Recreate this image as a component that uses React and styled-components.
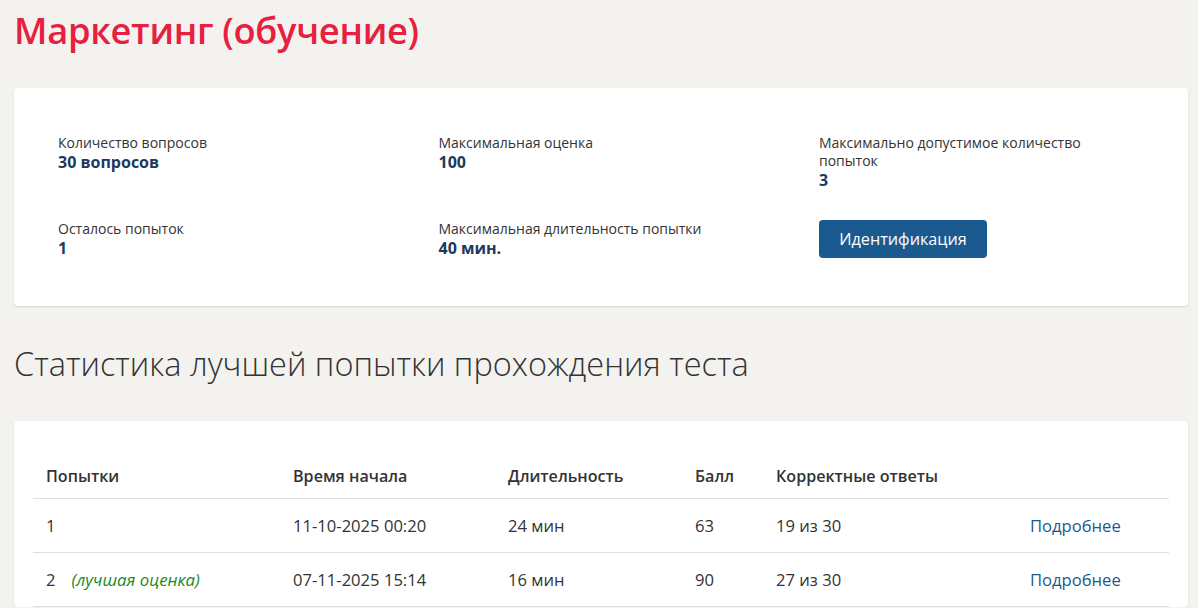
import React from 'react';
import styled, { createGlobalStyle } from 'styled-components';

const GlobalStyle = createGlobalStyle`
  body {
    margin: 0;
    background: #f3f2ef;
    font-family: 'Open Sans', 'Noto Sans', sans-serif;
    color: #333;
  }
`;

const info = [
  { label: 'Количество вопросов', value: '30 вопросов' },
  { label: 'Максимальная оценка', value: '100' },
  { label: 'Максимально допустимое количество попыток', value: '3' },
  { label: 'Осталось попыток', value: '1' },
  { label: 'Максимальная длительность попытки', value: '40 мин.' },
];

const attempts = [
  { n: 1, best: false, start: '11-10-2025 00:20', duration: '24 мин', score: 63, correct: '19 из 30' },
  { n: 2, best: true, start: '07-11-2025 15:14', duration: '16 мин', score: 90, correct: '27 из 30' },
];

const App = () => {
  return (
    <>
      <GlobalStyle />
      <Page>
        <Title>Маркетинг (обучение)</Title>
        <InfoCard>
          <InfoGrid>
            {info.map(item => (
              <InfoItem key={item.label}>
                <Label>{item.label}</Label>
                <Value>{item.value}</Value>
              </InfoItem>
            ))}
            <InfoItem>
              <IdButton>Идентификация</IdButton>
            </InfoItem>
          </InfoGrid>
        </InfoCard>

        <SectionTitle>Статистика лучшей попытки прохождения теста</SectionTitle>

        <TableCard>
          <Table>
            <colgroup>
              <col style={{ width: 247 }} />
              <col style={{ width: 215 }} />
              <col style={{ width: 187 }} />
              <col style={{ width: 81 }} />
              <col style={{ width: 254 }} />
              <col />
            </colgroup>
            <thead>
              <tr>
                <Th>Попытки</Th>
                <Th>Время начала</Th>
                <Th>Длительность</Th>
                <Th>Балл</Th>
                <Th>Корректные ответы</Th>
                <Th />
              </tr>
            </thead>
            <tbody>
              {attempts.map(a => (
                <tr key={a.n}>
                  <Td>
                    {a.n}
                    {a.best && <BestMark>(лучшая оценка)</BestMark>}
                  </Td>
                  <Td>{a.start}</Td>
                  <Td>{a.duration}</Td>
                  <Td>{a.score}</Td>
                  <Td>{a.correct}</Td>
                  <Td>
                    <DetailsLink href="#">Подробнее</DetailsLink>
                  </Td>
                </tr>
              ))}
            </tbody>
          </Table>
        </TableCard>
      </Page>
    </>
  );
};

const Page = styled.div`
  padding: 0 10px 0 14px;
`;

const Title = styled.h1`
  margin: 0;
  padding: 8px 0 0;
  font-size: 36.3px;
  line-height: 44px;
  font-weight: 600;
  color: #e8203f;
  letter-spacing: -0.3px;
`;

const InfoCard = styled.div`
  margin-top: 36px;
  background: #fff;
  border-radius: 4px;
  box-shadow: 0 1px 2px rgba(0, 0, 0, 0.12);
  padding: 46px 44px 48px;
`;

const InfoGrid = styled.div`
  display: grid;
  grid-template-columns: 325px 325px 1fr;
  column-gap: 55.5px;
  row-gap: 30px;
`;

const InfoItem = styled.div`
  display: flex;
  flex-direction: column;
  align-items: flex-start;
  padding-right: 40px;
`;

const Label = styled.div`
  font-size: 14px;
  line-height: 18px;
  color: #333;
`;

const Value = styled.div`
  font-size: 16px;
  line-height: 20px;
  font-weight: 700;
  color: #1b3a5e;
`;

const IdButton = styled.button`
  height: 38px;
  width: 168px;
  border: none;
  border-radius: 4px;
  background: #1b5a8f;
  color: #fff;
  font-family: inherit;
  font-size: 16.2px;
  cursor: pointer;
`;

const SectionTitle = styled.h2`
  margin: 38px 0 0;
  font-size: 32.5px;
  line-height: 40px;
  font-weight: 300;
  color: #333;
`;

const TableCard = styled.div`
  margin-top: 37px;
  background: #fff;
  border-radius: 4px;
  box-shadow: 0 1px 2px rgba(0, 0, 0, 0.12);
  padding: 33px 19px 0;
`;

const Table = styled.table`
  width: 100%;
  border-collapse: collapse;
  table-layout: fixed;
  font-size: 16.6px;
`;

const Th = styled.th`
  text-align: left;
  font-weight: 600;
  font-size: 16.1px;
  padding: 12px 13px;
  line-height: 20px;
  color: #333;
  border-bottom: 1px solid #dedede;
`;

const Td = styled.td`
  padding: 16px 13px;
  line-height: 21px;
  color: #333;
  border-bottom: 1px solid #dedede;
`;

const BestMark = styled.span`
  margin-left: 16px;
  font-style: italic;
  color: #1a8a22;
  font-size: 16.8px;
`;

const DetailsLink = styled.a`
  color: #1b5a8f;
  text-decoration: none;
`;

export default App;
